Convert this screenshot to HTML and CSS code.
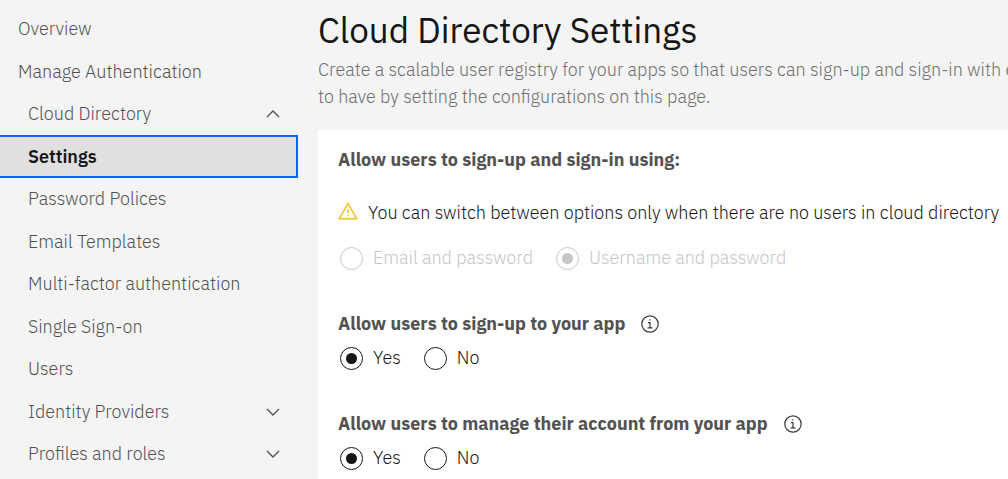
FILE: index.html
```html
<!DOCTYPE html>
<html lang="en">
<head>
<meta charset="utf-8">
<meta name="viewport" content="width=device-width, initial-scale=1">
<title>Cloud Directory Settings</title>
<link rel="stylesheet" href="styles.css">
</head>
<body>
<div class="layout">
  <nav class="sidebar" aria-label="Service">
    <ul class="nav">
      <li><a class="nav-link" href="#overview">Overview</a></li>
      <li><a class="nav-link" href="#manage">Manage Authentication</a></li>
      <li><button class="nav-link nested" type="button" aria-expanded="true">Cloud Directory
        <svg class="chevron" viewBox="0 0 14 8" aria-hidden="true"><path d="M1 7 7 1l6 6"/></svg></button></li>
      <li><a class="nav-link nested current" href="#settings" aria-current="page">Settings</a></li>
      <li><a class="nav-link nested" href="#password">Password Polices</a></li>
      <li><a class="nav-link nested" href="#email">Email Templates</a></li>
      <li><a class="nav-link nested" href="#mfa">Multi-factor authentication</a></li>
      <li><a class="nav-link nested" href="#sso">Single Sign-on</a></li>
      <li><a class="nav-link nested" href="#users">Users</a></li>
      <li><button class="nav-link nested" type="button" aria-expanded="false">Identity Providers
        <svg class="chevron" viewBox="0 0 14 8" aria-hidden="true"><path d="m1 1 6 6 6-6"/></svg></button></li>
      <li><button class="nav-link nested" type="button" aria-expanded="false">Profiles and roles
        <svg class="chevron" viewBox="0 0 14 8" aria-hidden="true"><path d="m1 1 6 6 6-6"/></svg></button></li>
    </ul>
  </nav>
  <main class="content">
    <h1 class="title">Cloud Directory Settings</h1>
    <p class="description">Create a scalable user registry for your apps so that users can sign-up and sign-in with ei<br>to have by setting the configurations on this page.</p>
    <form class="panel">
      <fieldset class="group" disabled>
        <legend class="legend">Allow users to sign-up and sign-in using:</legend>
        <p class="warning">
          <svg class="warning-icon" viewBox="0 0 20 18" aria-hidden="true"><path class="triangle" d="M10 1.5 18.7 16.8H1.3Z"/><path class="mark" d="M10 7v4.6M10 13v1.5"/></svg>
          You can switch between options only when there are no users in cloud directory</p>
        <div class="options">
          <label class="option"><input class="radio" type="radio" name="identifier">Email and password</label>
          <label class="option"><input class="radio" type="radio" name="identifier" checked>Username and password</label>
        </div>
      </fieldset>
      <fieldset class="group">
        <legend class="legend">Allow users to sign-up to your app
          <svg class="info" viewBox="0 0 18 18" aria-hidden="true"><circle cx="9" cy="9" r="8.2"/><path d="M7 7.6h2v5.2M6.6 12.9h4.8M8.2 4.9h1.2"/></svg></legend>
        <div class="options">
          <label class="option"><input class="radio" type="radio" name="signup" checked>Yes</label>
          <label class="option"><input class="radio" type="radio" name="signup">No</label>
        </div>
      </fieldset>
      <fieldset class="group">
        <legend class="legend">Allow users to manage their account from your app
          <svg class="info" viewBox="0 0 18 18" aria-hidden="true"><circle cx="9" cy="9" r="8.2"/><path d="M7 7.6h2v5.2M6.6 12.9h4.8M8.2 4.9h1.2"/></svg></legend>
        <div class="options">
          <label class="option"><input class="radio" type="radio" name="manage" checked>Yes</label>
          <label class="option"><input class="radio" type="radio" name="manage">No</label>
        </div>
      </fieldset>
    </form>
  </main>
</div>
</body>
</html>
```
FILE: styles.css
```css
* { box-sizing: border-box; }

body {
  margin: 0;
  background: #f4f4f4;
  color: #161616;
  font: 300 18px/24px "IBM Plex Sans", Roboto, "Liberation Sans", sans-serif;
}

.layout {
  display: grid;
  grid-template-columns: 298px minmax(0, 1fr);
  column-gap: 20px;
  height: 100vh;
  overflow: hidden;
}

.nav {
  display: grid;
  grid-auto-rows: 42px 43px;
  margin: 0;
  padding: 8px 0 0;
  list-style: none;
}

.nav-link {
  display: flex;
  align-items: center;
  justify-content: space-between;
  width: 100%;
  height: 100%;
  padding: 0 18px;
  border: 0;
  background: none;
  color: #525252;
  font: inherit;
  text-align: left;
  text-decoration: none;
}

.nested { padding-left: 28px; }

.current {
  background: #e0e0e0;
  color: #161616;
  font-weight: 600;
  box-shadow: inset 0 2px #0f62fe, inset -2px -2px #0f62fe;
}

.chevron {
  width: 14px;
  height: 8px;
  fill: none;
  stroke: #525252;
  stroke-width: 1.4;
}

.title {
  margin: 0;
  padding-top: 8px;
  font-size: 35px;
  font-weight: 400;
  line-height: 44px;
}

.description {
  margin: 4px 0 20px;
  color: #6f6f6f;
  line-height: 27px;
  white-space: nowrap;
}

.panel {
  padding: 18px 20px;
  background: #fff;
}

.group {
  min-width: 0;
  margin: 0 0 42px;
  padding: 0;
  border: 0;
}

.legend {
  display: flex;
  align-items: center;
  gap: 16px;
  padding: 0;
  color: #525252;
  font-weight: 700;
}

.info {
  width: 18px;
  height: 18px;
  fill: none;
  stroke: #393939;
  stroke-width: 1.2;
}

.warning {
  display: flex;
  align-items: center;
  gap: 10px;
  margin: 29px 0 21px;
  white-space: nowrap;
}

.warning-icon {
  flex: none;
  width: 20px;
  height: 22px;
  padding-bottom: 4px;
  fill: none;
  stroke: #f1c21b;
}

.triangle { stroke-width: 1.5; }
.mark { stroke-width: 1.4; }

.options {
  display: flex;
  gap: 23px;
  padding: 10px 0 0 2px;
}

.warning + .options { padding-top: 0; }

.option {
  display: flex;
  align-items: center;
  gap: 10px;
}

.radio {
  appearance: none;
  display: grid;
  place-items: center;
  width: 23px;
  height: 23px;
  margin: 0;
  border: 1px solid #161616;
  border-radius: 50%;
}

.radio:checked::before {
  content: "";
  width: 11px;
  height: 11px;
  border-radius: 50%;
  background: #161616;
}

.group:disabled .option,
.group:disabled .radio {
  border-color: #c6c6c6;
  color: #c6c6c6;
}

.group:disabled .radio::before { background: #c6c6c6; }
```
